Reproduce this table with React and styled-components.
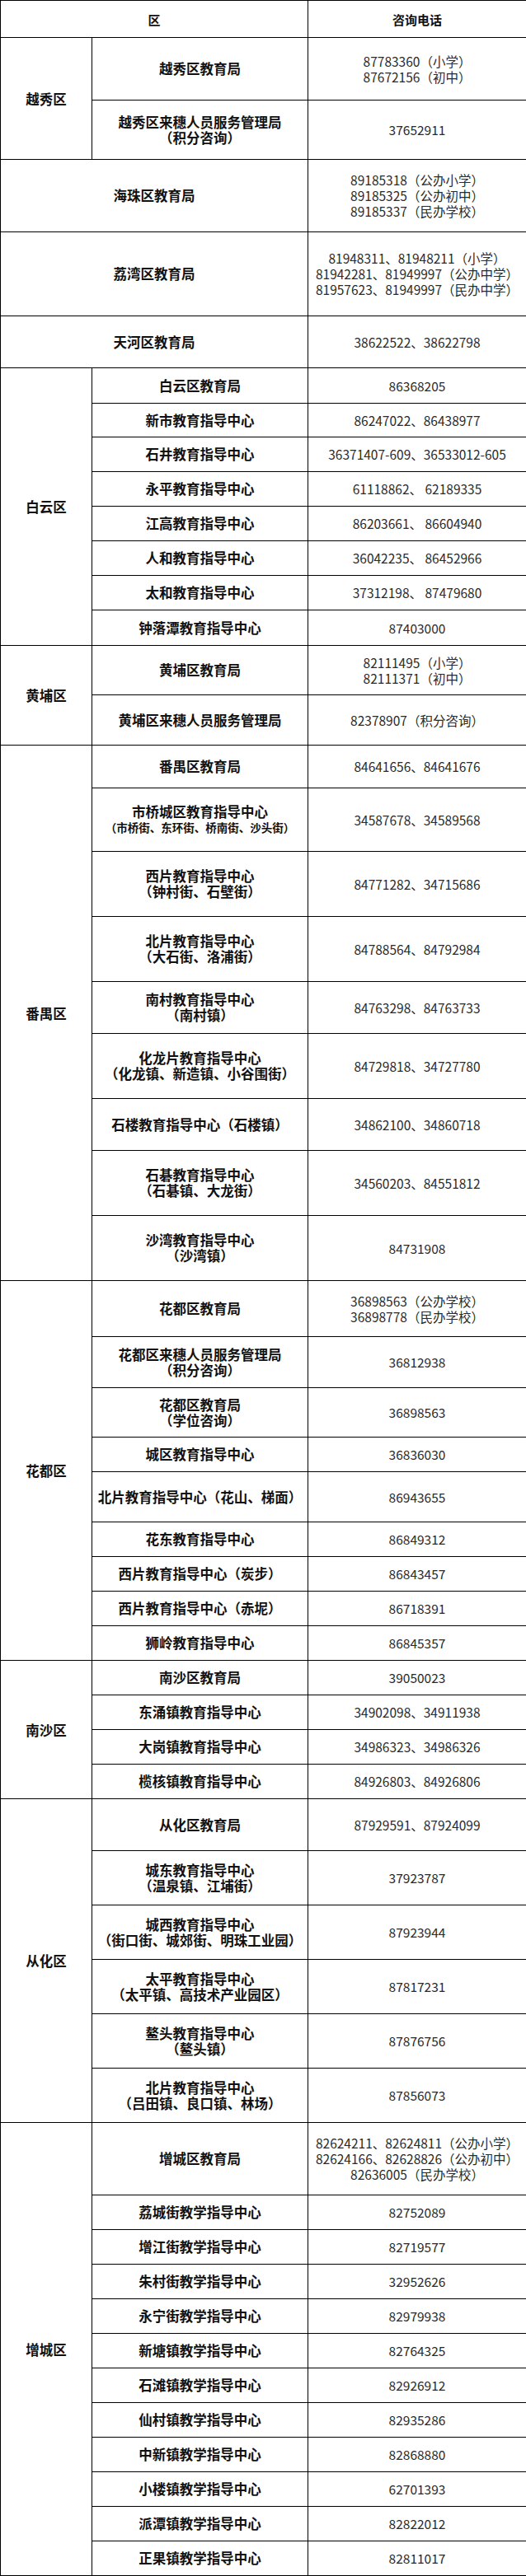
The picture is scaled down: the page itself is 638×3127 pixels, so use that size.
import React from 'react';
import styled, { createGlobalStyle } from 'styled-components';

const GlobalStyle = createGlobalStyle`
  html, body {
    margin: 0;
    padding: 0;
    background: #fff;
  }
  body {
    font-family: "Noto Sans CJK SC", "Liberation Sans", sans-serif;
  }
`;

const Table = styled.table`
  width: 638px;
  border-collapse: collapse;
  table-layout: fixed;
  color: #111;
`;

const Row = styled.tr`
  height: ${p => p.$h}px;
`;

const HeadCell = styled.th`
  border: 1px solid #000;
  font-size: 15px;
  font-weight: 700;
  text-align: center;
  vertical-align: middle;
  padding: 0;
`;

const DistrictCell = styled.td`
  border: 1px solid #000;
  font-size: 16.5px;
  font-weight: 700;
  text-align: center;
  vertical-align: middle;
  padding: 0;
`;

const NameCell = styled.td`
  border: 1px solid #000;
  font-size: 16.5px;
  font-weight: 700;
  line-height: 19px;
  text-align: center;
  vertical-align: middle;
  padding: 0;
  white-space: nowrap;
`;

const PhoneCell = styled.td`
  border: 1px solid #000;
  font-size: 15.5px;
  font-weight: 400;
  line-height: 19px;
  color: #2a2a2a;
  text-align: center;
  vertical-align: middle;
  padding: 0;
  white-space: nowrap;
`;

const Line = styled.span`
  display: block;
  font-size: ${p => (p.$small ? '13.5px' : 'inherit')};
`;

const groups = [
  {
    district: '越秀区',
    rows: [
      { h: 76, name: ['越秀区教育局'], phone: ['87783360（小学）', '87672156（初中）'] },
      { h: 72, name: ['越秀区来穗人员服务管理局', '（积分咨询）'], phone: ['37652911'] },
    ],
  },
  {
    rows: [
      { h: 88, name: ['海珠区教育局'], phone: ['89185318（公办小学）', '89185325（公办初中）', '89185337（民办学校）'] },
    ],
  },
  {
    rows: [
      {
        h: 102,
        name: ['荔湾区教育局'],
        phone: ['81948311、81948211（小学）', '81942281、81949997（公办中学）', '81957623、81949997（民办中学）'],
      },
    ],
  },
  {
    rows: [{ h: 63, name: ['天河区教育局'], phone: ['38622522、38622798'] }],
  },
  {
    district: '白云区',
    rows: [
      { h: 43, name: ['白云区教育局'], phone: ['86368205'] },
      { h: 41, name: ['新市教育指导中心'], phone: ['86247022、86438977'] },
      { h: 42, name: ['石井教育指导中心'], phone: ['36371407-609、36533012-605'] },
      { h: 42, name: ['永平教育指导中心'], phone: ['61118862、 62189335'] },
      { h: 42, name: ['江高教育指导中心'], phone: ['86203661、 86604940'] },
      { h: 42, name: ['人和教育指导中心'], phone: ['36042235、 86452966'] },
      { h: 42, name: ['太和教育指导中心'], phone: ['37312198、 87479680'] },
      { h: 43, name: ['钟落潭教育指导中心'], phone: ['87403000'] },
    ],
  },
  {
    district: '黄埔区',
    rows: [
      { h: 60, name: ['黄埔区教育局'], phone: ['82111495（小学）', '82111371（初中）'] },
      { h: 61, name: ['黄埔区来穗人员服务管理局'], phone: ['82378907（积分咨询）'] },
    ],
  },
  {
    district: '番禺区',
    rows: [
      { h: 52, name: ['番禺区教育局'], phone: ['84641656、84641676'] },
      {
        h: 77,
        name: ['市桥城区教育指导中心', { text: '（市桥街、东环街、桥南街、沙头街）', small: true }],
        phone: ['34587678、34589568'],
      },
      { h: 79, name: ['西片教育指导中心', '（钟村街、石壁街）'], phone: ['84771282、34715686'] },
      { h: 79, name: ['北片教育指导中心', '（大石街、洛浦街）'], phone: ['84788564、84792984'] },
      { h: 63, name: ['南村教育指导中心', '（南村镇）'], phone: ['84763298、84763733'] },
      { h: 79, name: ['化龙片教育指导中心', '（化龙镇、新造镇、小谷围街）'], phone: ['84729818、34727780'] },
      { h: 63, name: ['石楼教育指导中心（石楼镇）'], phone: ['34862100、34860718'] },
      { h: 79, name: ['石碁教育指导中心', '（石碁镇、大龙街）'], phone: ['34560203、84551812'] },
      { h: 79, name: ['沙湾教育指导中心', '（沙湾镇）'], phone: ['84731908'] },
    ],
  },
  {
    district: '花都区',
    rows: [
      { h: 68, name: ['花都区教育局'], phone: ['36898563（公办学校）', '36898778（民办学校）'] },
      { h: 62, name: ['花都区来穗人员服务管理局', '（积分咨询）'], phone: ['36812938'] },
      { h: 60, name: ['花都区教育局', '（学位咨询）'], phone: ['36898563'] },
      { h: 42, name: ['城区教育指导中心'], phone: ['36836030'] },
      { h: 61, name: ['北片教育指导中心（花山、梯面）'], phone: ['86943655'] },
      { h: 42, name: ['花东教育指导中心'], phone: ['86849312'] },
      { h: 42, name: ['西片教育指导中心（炭步）'], phone: ['86843457'] },
      { h: 42, name: ['西片教育指导中心（赤坭）'], phone: ['86718391'] },
      { h: 42, name: ['狮岭教育指导中心'], phone: ['86845357'] },
    ],
  },
  {
    district: '南沙区',
    rows: [
      { h: 42, name: ['南沙区教育局'], phone: ['39050023'] },
      { h: 42, name: ['东涌镇教育指导中心'], phone: ['34902098、34911938'] },
      { h: 42, name: ['大岗镇教育指导中心'], phone: ['34986323、34986326'] },
      { h: 42, name: ['榄核镇教育指导中心'], phone: ['84926803、84926806'] },
    ],
  },
  {
    district: '从化区',
    rows: [
      { h: 63, name: ['从化区教育局'], phone: ['87929591、87924099'] },
      { h: 66, name: ['城东教育指导中心', '（温泉镇、江埔街）'], phone: ['37923787'] },
      { h: 66, name: ['城西教育指导中心', '（街口街、城郊街、明珠工业园）'], phone: ['87923944'] },
      { h: 66, name: ['太平教育指导中心', '（太平镇、高技术产业园区）'], phone: ['87817231'] },
      { h: 66, name: ['鳌头教育指导中心', '（鳌头镇）'], phone: ['87876756'] },
      { h: 66, name: ['北片教育指导中心', '（吕田镇、良口镇、林场）'], phone: ['87856073'] },
    ],
  },
  {
    district: '增城区',
    rows: [
      {
        h: 88,
        name: ['增城区教育局'],
        phone: ['82624211、82624811（公办小学）', '82624166、82628826（公办初中）', '82636005（民办学校）'],
      },
      { h: 42, name: ['荔城街教学指导中心'], phone: ['82752089'] },
      { h: 42, name: ['增江街教学指导中心'], phone: ['82719577'] },
      { h: 42, name: ['朱村街教学指导中心'], phone: ['32952626'] },
      { h: 42, name: ['永宁街教学指导中心'], phone: ['82979938'] },
      { h: 42, name: ['新塘镇教学指导中心'], phone: ['82764325'] },
      { h: 42, name: ['石滩镇教学指导中心'], phone: ['82926912'] },
      { h: 42, name: ['仙村镇教学指导中心'], phone: ['82935286'] },
      { h: 42, name: ['中新镇教学指导中心'], phone: ['82868880'] },
      { h: 42, name: ['小楼镇教学指导中心'], phone: ['62701393'] },
      { h: 42, name: ['派潭镇教学指导中心'], phone: ['82822012'] },
      { h: 42, name: ['正果镇教学指导中心'], phone: ['82811017'] },
    ],
  },
];

const Lines = ({ items }) =>
  items.map((item, i) =>
    typeof item === 'string' ? (
      <Line key={i}>{item}</Line>
    ) : (
      <Line key={i} $small={item.small}>
        {item.text}
      </Line>
    )
  );

export default function App() {
  return (
    <>
      <GlobalStyle />
      <Table>
        <colgroup>
          <col style={{ width: 111 }} />
          <col style={{ width: 262 }} />
          <col style={{ width: 265 }} />
        </colgroup>
        <thead>
          <Row $h={45}>
            <HeadCell colSpan={2}>区</HeadCell>
            <HeadCell>咨询电话</HeadCell>
          </Row>
        </thead>
        <tbody>
          {groups.map((g, gi) =>
            g.rows.map((r, ri) => (
              <Row key={`${gi}-${ri}`} $h={r.h}>
                {g.district && ri === 0 && (
                  <DistrictCell rowSpan={g.rows.length}>{g.district}</DistrictCell>
                )}
                <NameCell colSpan={g.district ? 1 : 2}>
                  <Lines items={r.name} />
                </NameCell>
                <PhoneCell>
                  <Lines items={r.phone} />
                </PhoneCell>
              </Row>
            ))
          )}
        </tbody>
      </Table>
    </>
  );
}
